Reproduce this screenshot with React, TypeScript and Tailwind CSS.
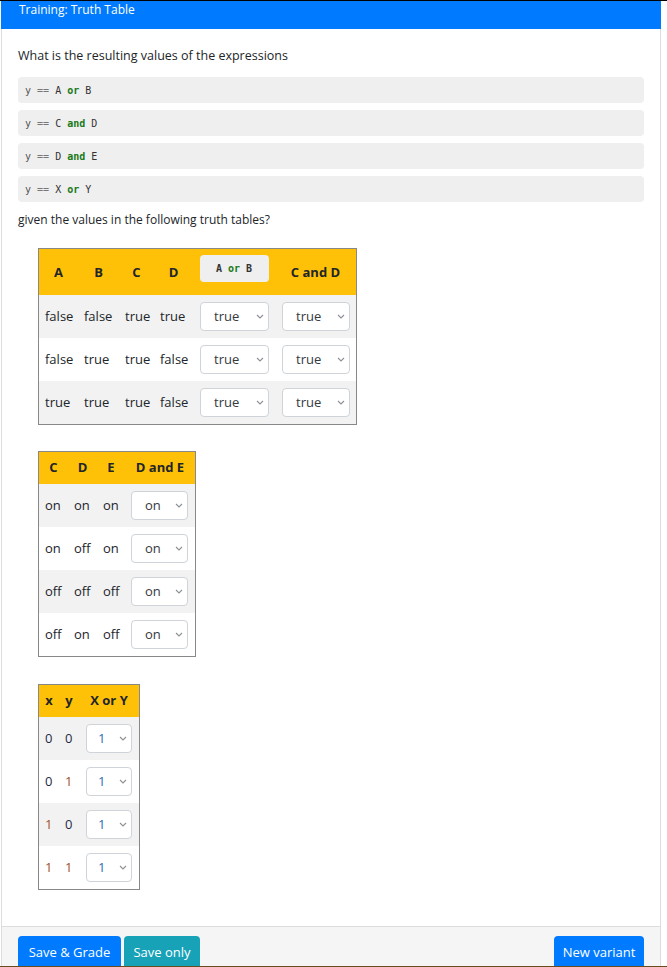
import React from "react";

const font = { fontFamily: '"Open Sans", "Noto Sans", Arial, sans-serif' };
const mono = { fontFamily: '"DejaVu Sans Mono", "Liberation Mono", monospace' };

function Chevron() {
  return (
    <svg width="8" height="5" viewBox="0 0 8 5" className="shrink-0">
      <path d="M1 1l3 3 3-3" fill="none" stroke="#8a9096" strokeWidth="1.1" />
    </svg>
  );
}

function Sel({ value, w }: { value: string; w: string }) {
  return (
    <div
      className={`${w} h-[29px] flex items-center justify-between rounded-[4px] border border-[#ced4da] bg-white pl-[13px] pr-[4px] text-[13px] text-[#343a40]`}
    >
      <span>{value}</span>
      <Chevron />
    </div>
  );
}

function Expr({ a, op, b }: { a: string; op: string; b: string }) {
  return (
    <span style={mono} className="text-[10px]">
      <span className="text-[#333]">{a}</span>{" "}
      <span className="text-[#1a7a1a] font-bold">{op}</span>{" "}
      <span className="text-[#333]">{b}</span>
    </span>
  );
}

function CodeLine({ a, op, b }: { a: string; op: string; b: string }) {
  return (
    <div className="h-[26px] rounded-[4px] bg-[#efefef] flex items-center pl-[7px]">
      <span style={mono} className="text-[10px] whitespace-pre">
        <span className="text-[#555]">y</span> <span className="text-[#777]">==</span>{" "}
        <Expr a={a} op={op} b={b} />
      </span>
    </div>
  );
}

export default function App() {
  const t1 = [
    ["false", "false", "true", "true"],
    ["false", "true", "true", "false"],
    ["true", "true", "true", "false"],
  ];
  const t2 = [
    ["on", "on", "on"],
    ["on", "off", "on"],
    ["off", "off", "off"],
    ["off", "on", "off"],
  ];
  const t3 = [
    ["0", "0"],
    ["0", "1"],
    ["1", "0"],
    ["1", "1"],
  ];
  const rowBg = (i: number) => (i % 2 === 0 ? "bg-[#f2f2f2]" : "bg-white");

  return (
    <div style={font} className="w-[667px] h-[967px] overflow-hidden bg-white border-t border-black border-b border-b-[#6b4a1e] text-[#212529]">
      <div className="pl-[1px] w-[661px]">
        {/* header */}
        <div className="h-[28px] bg-[#007bff] text-white text-[12px] leading-[18px] pl-[18px]">
          Training: Truth Table
        </div>
        {/* body */}
        <div className="border-x border-[#ddd] px-[16px] pt-[18px] h-[897px]">
          <div className="text-[12.5px] leading-[18px]">What is the resulting values of the expressions</div>
          <div className="mt-[12px] flex flex-col gap-[7px]">
            <CodeLine a="A" op="or" b="B" />
            <CodeLine a="C" op="and" b="D" />
            <CodeLine a="D" op="and" b="E" />
            <CodeLine a="X" op="or" b="Y" />
          </div>
          <div className="mt-[9px] text-[12px] leading-[18px]">given the values in the following truth tables?</div>

          {/* table 1 */}
          <div className="mt-[19px] ml-[20px] w-[319px] border border-[#888]">
            <div className="grid grid-cols-[39px_41px_35px_39px_82px_81px] h-[46px] bg-[#ffc107] items-center text-center text-[13px] font-bold">
              <div className="pt-[2px]">A</div>
              <div className="pt-[2px]">B</div>
              <div className="pt-[2px]">C</div>
              <div className="pt-[2px]">D</div>
              <div className="flex justify-center">
                <div className="w-[69px] h-[27px] rounded-[4px] bg-[#efefef] flex items-center justify-center -mt-[7px]">
                  <Expr a="A" op="or" b="B" />
                </div>
              </div>
              <div className="pt-[2px]">C and D</div>
            </div>
            {t1.map((r, i) => (
              <div key={i} className={`grid grid-cols-[39px_41px_35px_39px_82px_81px] h-[43px] items-center text-[13px] ${rowBg(i)}`}>
                {r.map((c, j) => (
                  <div key={j} className="pl-[6px]">{c}</div>
                ))}
                <div className="pl-[7px]"><Sel value="true" w="w-[69px]" /></div>
                <div className="pl-[7px]"><Sel value="true" w="w-[68px]" /></div>
              </div>
            ))}
          </div>

          {/* table 2 */}
          <div className="mt-[26px] ml-[20px] w-[158px] border border-[#888]">
            <div className="grid grid-cols-[29px_29px_28px_70px] h-[32px] bg-[#ffc107] items-center text-center text-[13px] font-bold">
              <div>C</div>
              <div>D</div>
              <div>E</div>
              <div>D and E</div>
            </div>
            {t2.map((r, i) => (
              <div key={i} className={`grid grid-cols-[29px_29px_28px_70px] h-[43px] items-center text-[13px] ${rowBg(i)}`}>
                {r.map((c, j) => (
                  <div key={j} className="pl-[6px]">{c}</div>
                ))}
                <div className="pl-[6px]"><Sel value="on" w="w-[57px]" /></div>
              </div>
            ))}
          </div>

          {/* table 3 */}
          <div className="mt-[27px] ml-[20px] w-[102px] border border-[#888]">
            <div className="grid grid-cols-[20px_20px_60px] h-[32px] bg-[#ffc107] items-center text-center text-[13px] font-bold">
              <div>x</div>
              <div>y</div>
              <div>X or Y</div>
            </div>
            {t3.map((r, i) => (
              <div key={i} className={`grid grid-cols-[20px_20px_60px] h-[43px] items-center text-[13px] ${rowBg(i)}`}>
                {r.map((c, j) => (
                  <div key={j} className={`pl-[6px] ${c === "1" ? "text-[#a0522d]" : "text-[#1f2a44]"}`}>{c}</div>
                ))}
                <div className="pl-[7px]">
                  <div className="w-[46px] h-[29px] flex items-center justify-between rounded-[4px] border border-[#ced4da] bg-white pl-[11px] pr-[4px] text-[13px] text-[#2a6fb5]">
                    <span>1</span>
                    <Chevron />
                  </div>
                </div>
              </div>
            ))}
          </div>
        </div>
        {/* footer */}
        <div className="border-x border-t border-[#ddd] bg-[#f5f5f5] h-[60px] px-[16px] pt-[9px] flex">
          <div className="h-[38px] pt-[7px] rounded-[4px] bg-[#007bff] text-white text-[13px] w-[103px] text-center whitespace-nowrap">Save &amp; Grade</div>
          <div className="ml-[3px] h-[38px] pt-[7px] rounded-[4px] bg-[#17a2b8] text-white text-[13px] w-[76px] text-center whitespace-nowrap">Save only</div>
          <div className="ml-auto h-[38px] pt-[7px] rounded-[4px] bg-[#007bff] text-white text-[13px] w-[90px] text-center whitespace-nowrap">New variant</div>
        </div>
      </div>
    </div>
  );
}
